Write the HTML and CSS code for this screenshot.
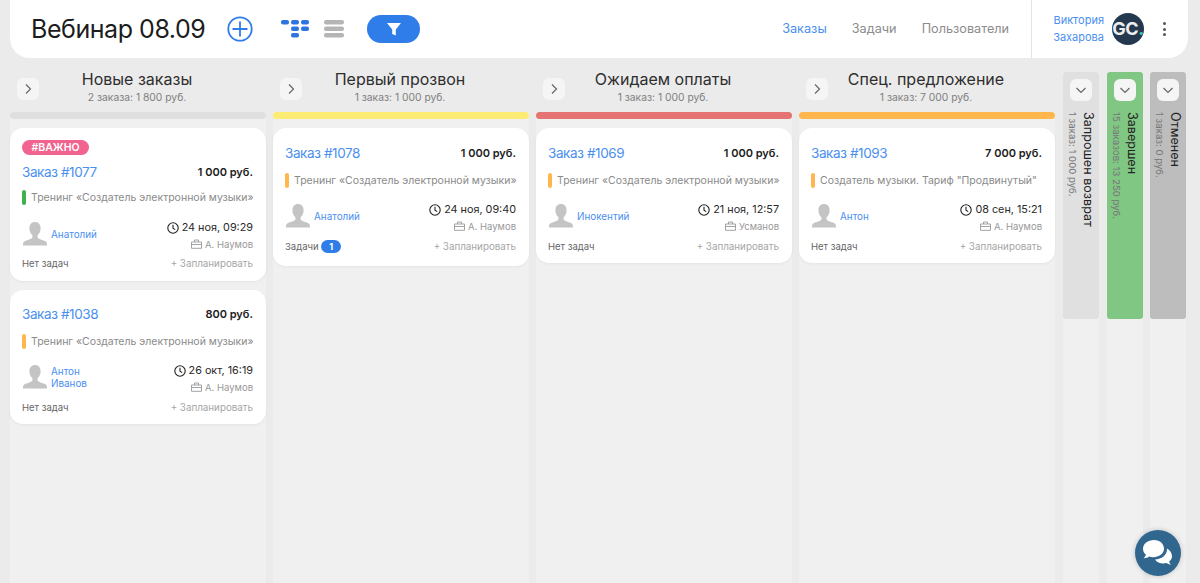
FILE: index.html
```html
<!DOCTYPE html>
<html lang="ru">
<head>
    <meta charset="UTF-8">
    <title>Вебинар 08.09</title>
    <link rel="stylesheet" href="styles.css">
</head>
<body>
    <svg class="sprite" width="0" height="0">
        <symbol id="i-chev-r" viewBox="0 0 12 12"><path d="M4 1.500 8.500 6 4 10.500" fill="none" stroke="#666" stroke-width="1.200"/></symbol>
        <symbol id="i-chev-d" viewBox="0 0 12 12"><path d="M1.500 4 6 8.500 10.500 4" fill="none" stroke="#666" stroke-width="1.200"/></symbol>
        <symbol id="i-user" viewBox="0 0 26 26"><path d="M13 1c3.600 0 5.600 2.700 5.600 6.200 0 3-1.300 5.600-3 7v2.200c0 1 4.400 2.300 7.400 3.600 1.600.7 2 2 2 4.500H1c0-2.500.4-3.800 2-4.500 3-1.300 7.400-2.600 7.400-3.600v-2.200c-1.700-1.400-3-4-3-7C7.400 3.700 9.400 1 13 1z" fill="#c4c4c4"/></symbol>
        <symbol id="i-clock" viewBox="0 0 12 12"><circle cx="6" cy="6" r="5.200" fill="none" stroke="#222" stroke-width="1.100"/><path d="M6 2.800V6.300L8.200 7.600" fill="none" stroke="#222" stroke-width="1.100"/></symbol>
        <symbol id="i-case" viewBox="0 0 11 10"><path d="M.5 3h10v6.300H.5zM3.500 3V1h4v2M.5 5.500h10" fill="none" stroke="#999" stroke-width=".9"/></symbol>
    </svg>

    <header class="topbar">
        <h1 class="title">Вебинар 08.09</h1>
        <svg class="add-btn" width="26" height="26" viewBox="0 0 26 26"><circle cx="13" cy="13" r="11.700" fill="none" stroke="#2f7de8" stroke-width="1.800"/><path d="M13 5.500v15M5.500 13h15" stroke="#2f7de8" stroke-width="1.800"/></svg>
        <svg class="view-btn view-board" width="30" height="20" viewBox="0 0 30 20" fill="#2f73e0">
            <rect x="1" y="1" width="8" height="4.500" rx="2"/><rect x="11" y="1" width="8" height="4.500" rx="2"/><rect x="21" y="1" width="8" height="4.500" rx="2"/>
            <rect x="11" y="7.500" width="8" height="4.500" rx="2"/><rect x="21" y="7.500" width="8" height="4.500" rx="2"/>
            <rect x="11" y="14" width="8" height="4.500" rx="2"/>
        </svg>
        <svg class="view-btn" width="20" height="20" viewBox="0 0 20 20" fill="#b5b5b5">
            <rect y="1" width="20" height="4.500" rx="2"/><rect y="7.500" width="20" height="4.500" rx="2"/><rect y="14" width="20" height="4.500" rx="2"/>
        </svg>
        <button class="filter-btn"><svg width="14" height="14" viewBox="0 0 14 14"><path d="M0 1h14L8.800 7.500V13.500L5.200 12V7.500z" fill="#fff"/></svg></button>
        <nav class="nav">
            <a class="active">Заказы</a>
            <a>Задачи</a>
            <a>Пользователи</a>
        </nav>
        <div class="profile">
            <div class="profile-name">Виктория<br>Захарова</div>
            <div class="avatar">GC<span>.</span></div>
            <div class="dots"><i></i><i></i><i></i></div>
        </div>
    </header>

    <main class="board">
        <section class="col">
            <div class="col-head">
                <span class="toggle"><svg width="12" height="12"><use href="#i-chev-r"/></svg></span>
                <div class="col-title"><h2>Новые заказы</h2><p>2 заказа: 1 800 руб.</p></div>
            </div>
            <div class="col-bar bar-grey"></div>
            <article class="card card-tagged">
                <span class="tag">#ВАЖНО</span>
                <div class="card-top"><a class="order">Заказ #1077</a><b class="price">1 000 руб.</b></div>
                <div class="product"><i class="mark mark-green"></i>Тренинг «Создатель электронной музыки»</div>
                <div class="card-mid">
                    <svg class="user-pic" width="26" height="26"><use href="#i-user"/></svg>
                    <a class="client">Анатолий</a>
                    <div class="meta">
                        <div class="date"><svg width="12" height="12"><use href="#i-clock"/></svg>24 ноя, 09:29</div>
                        <div class="manager"><svg width="11" height="10"><use href="#i-case"/></svg>А. Наумов</div>
                    </div>
                </div>
                <div class="card-foot"><span>Нет задач</span><a>+ Запланировать</a></div>
            </article>
            <article class="card card-second">
                <div class="card-top"><a class="order">Заказ #1038</a><b class="price">800 руб.</b></div>
                <div class="product"><i class="mark mark-orange"></i>Тренинг «Создатель электронной музыки»</div>
                <div class="card-mid">
                    <svg class="user-pic" width="26" height="26"><use href="#i-user"/></svg>
                    <a class="client">Антон<br>Иванов</a>
                    <div class="meta">
                        <div class="date"><svg width="12" height="12"><use href="#i-clock"/></svg>26 окт, 16:19</div>
                        <div class="manager"><svg width="11" height="10"><use href="#i-case"/></svg>А. Наумов</div>
                    </div>
                </div>
                <div class="card-foot"><span>Нет задач</span><a>+ Запланировать</a></div>
            </article>
        </section>

        <section class="col">
            <div class="col-head">
                <span class="toggle"><svg width="12" height="12"><use href="#i-chev-r"/></svg></span>
                <div class="col-title"><h2>Первый прозвон</h2><p>1 заказ: 1 000 руб.</p></div>
            </div>
            <div class="col-bar bar-yellow"></div>
            <article class="card card-tasks">
                <div class="card-top"><a class="order">Заказ #1078</a><b class="price">1 000 руб.</b></div>
                <div class="product"><i class="mark mark-orange"></i>Тренинг «Создатель электронной музыки»</div>
                <div class="card-mid">
                    <svg class="user-pic" width="26" height="26"><use href="#i-user"/></svg>
                    <a class="client">Анатолий</a>
                    <div class="meta">
                        <div class="date"><svg width="12" height="12"><use href="#i-clock"/></svg>24 ноя, 09:40</div>
                        <div class="manager"><svg width="11" height="10"><use href="#i-case"/></svg>А. Наумов</div>
                    </div>
                </div>
                <div class="card-foot"><span>Задачи <em class="count">1</em></span><a>+ Запланировать</a></div>
            </article>
        </section>

        <section class="col">
            <div class="col-head">
                <span class="toggle"><svg width="12" height="12"><use href="#i-chev-r"/></svg></span>
                <div class="col-title"><h2>Ожидаем оплаты</h2><p>1 заказ: 1 000 руб.</p></div>
            </div>
            <div class="col-bar bar-red"></div>
            <article class="card">
                <div class="card-top"><a class="order">Заказ #1069</a><b class="price">1 000 руб.</b></div>
                <div class="product"><i class="mark mark-orange"></i>Тренинг «Создатель электронной музыки»</div>
                <div class="card-mid">
                    <svg class="user-pic" width="26" height="26"><use href="#i-user"/></svg>
                    <a class="client">Инокентий</a>
                    <div class="meta">
                        <div class="date"><svg width="12" height="12"><use href="#i-clock"/></svg>21 ноя, 12:57</div>
                        <div class="manager"><svg width="11" height="10"><use href="#i-case"/></svg>Усманов</div>
                    </div>
                </div>
                <div class="card-foot"><span>Нет задач</span><a>+ Запланировать</a></div>
            </article>
        </section>

        <section class="col col-last">
            <div class="col-head">
                <span class="toggle"><svg width="12" height="12"><use href="#i-chev-r"/></svg></span>
                <div class="col-title"><h2>Спец. предложение</h2><p>1 заказ: 7 000 руб.</p></div>
            </div>
            <div class="col-bar bar-orange"></div>
            <article class="card">
                <div class="card-top"><a class="order">Заказ #1093</a><b class="price">7 000 руб.</b></div>
                <div class="product"><i class="mark mark-orange"></i>Создатель музыки. Тариф "Продвинутый"</div>
                <div class="card-mid">
                    <svg class="user-pic" width="26" height="26"><use href="#i-user"/></svg>
                    <a class="client">Антон</a>
                    <div class="meta">
                        <div class="date"><svg width="12" height="12"><use href="#i-clock"/></svg>08 сен, 15:21</div>
                        <div class="manager"><svg width="11" height="10"><use href="#i-case"/></svg>А. Наумов</div>
                    </div>
                </div>
                <div class="card-foot"><span>Нет задач</span><a>+ Запланировать</a></div>
            </article>
        </section>

        <section class="col-mini">
            <div class="mini-head mini-grey">
                <span class="toggle"><svg width="12" height="12"><use href="#i-chev-d"/></svg></span>
                <div class="mini-text"><h2>Запрошен возврат</h2><p>1 заказ: 1 000 руб.</p></div>
            </div>
        </section>
        <section class="col-mini">
            <div class="mini-head mini-green">
                <span class="toggle"><svg width="12" height="12"><use href="#i-chev-d"/></svg></span>
                <div class="mini-text"><h2>Завершен</h2><p>15 заказов: 13 250 руб.</p></div>
            </div>
        </section>
        <section class="col-mini col-mini-last">
            <div class="mini-head mini-dark">
                <span class="toggle"><svg width="12" height="12"><use href="#i-chev-d"/></svg></span>
                <div class="mini-text"><h2>Отменен</h2><p>1 заказ: 0 руб.</p></div>
            </div>
        </section>
    </main>

    <button class="chat-btn">
        <svg width="32" height="28" viewBox="0 0 32 28" fill="#fff">
            <path d="M12 1C5.900 1 1 4.900 1 9.700c0 2.300 1.100 4.300 2.900 5.900-.3 1.500-1.200 2.800-2.300 3.600 2.100.1 4.200-.6 5.700-1.600 1.200.4 2.400.6 3.700.6 6.100 0 11-3.900 11-8.500S18.100 1 12 1z"/>
            <path d="M24.900 9.400c.1.400.1.700.1 1.100 0 5.500-5.300 9.700-12 10 1.700 2.400 4.800 4 8.400 4 1 0 2-.1 2.900-.4 1.300.9 3 1.500 4.700 1.500-.9-.7-1.600-1.800-1.900-3 1.700-1.300 2.900-3.200 2.900-5.200 0-3.400-1.900-6.400-5.100-8z"/>
        </svg>
    </button>
</body>
</html>
```

FILE: styles.css
```css
* {
    box-sizing: border-box;
}

html, body {
    height: 100%;
}

body {
    margin: 0;
    background: #ebebeb;
    font-family: Inter, "Noto Sans", sans-serif;
    color: #222;
    overflow: hidden;
}

.sprite {
    display: block;
    height: 0;
}

h1, h2, p {
    margin: 0;
    font-weight: 400;
}

/* шапка */
.topbar {
    display: flex;
    align-items: center;
    height: 58px;
    margin: 0 12px 0 10px;
    padding-left: 21px;
    background: #fff;
    border-radius: 0 0 20px 20px;
}

.title {
    margin-top: -1px;
    font-size: 25px;
    letter-spacing: -0.45px;
    color: #1c1c1c;
    white-space: nowrap;
}

.add-btn {
    margin-left: 22px;
}

.view-btn {
    margin-left: 14px;
}

.view-board {
    margin-left: 27px;
}

.filter-btn {
    display: flex;
    align-items: center;
    justify-content: center;
    width: 53px;
    height: 28px;
    margin-left: 23px;
    padding: 0;
    background: #2f7de8;
    border: none;
    border-radius: 14px;
}

.nav {
    display: flex;
    gap: 25px;
    margin: -2px 0 0 auto;
    font-size: 12.700px;
    color: #8c8c8c;
}

.nav .active {
    color: #4a8ff0;
}

.profile {
    display: flex;
    align-items: center;
    height: 100%;
    margin-left: 22px;
    padding-left: 21px;
    border-left: 1px solid #e4e4e4;
}

.profile-name {
    font-size: 11px;
    line-height: 17px;
    color: #4a8ff0;
    text-align: right;
}

.avatar {
    width: 32px;
    height: 32px;
    margin-left: 8px;
    background: #24394f;
    border-radius: 50%;
    font-size: 18px;
    font-weight: 700;
    line-height: 32px;
    text-align: center;
    color: #eee;
    letter-spacing: -0.5px;
    white-space: nowrap;
}

.avatar span {
    color: #35c9b5;
}

.dots {
    display: flex;
    flex-direction: column;
    gap: 2.500px;
    margin: 0 22px 0 19px;
}

.dots i {
    width: 3px;
    height: 3px;
    background: #555;
    border-radius: 50%;
}

/* доска */
.board {
    display: flex;
    height: calc(100% - 58px);
    padding-left: 10px;
}

.col {
    display: flex;
    flex-direction: column;
    width: 256px;
    margin-right: 7px;
    background: linear-gradient(#ebebeb 54px, #f0f0f0 54px);
}

.col-last {
    margin-right: 8px;
}

.col-head {
    display: flex;
    height: 54px;
    padding: 20px 0 0 7px;
}

.toggle {
    display: flex;
    align-items: center;
    justify-content: center;
    flex: none;
    width: 22px;
    height: 22px;
    background: #f5f5f5;
    border-radius: 6px;
}

.col-title {
    flex: 1;
    margin-top: -11px;
    padding-right: 31px;
    text-align: center;
}

.col-title h2 {
    font-size: 16px;
    line-height: 24px;
    color: #2e2e2e;
}

.col-title p {
    font-size: 10.300px;
    line-height: 13px;
    color: #808080;
}

.col-bar {
    height: 7px;
    margin-bottom: 9px;
    border-radius: 4px;
}

.bar-grey { background: #dfdfdf; }
.bar-yellow { background: #fdec74; }
.bar-red { background: #e57373; }
.bar-orange { background: #ffb74d; }

.card {
    height: 135px;
    margin-bottom: 9px;
    padding: 15px 13px 0 12px;
    background: #fff;
    border-radius: 13px;
    box-shadow: 0 1px 3px rgba(0, 0, 0, 0.05);
}

.card-tasks {
    height: 138px;
}

.card-second {
    height: 134px;
    padding-top: 14px;
}

.card-tagged {
    height: 153px;
    padding-top: 9px;
}

.card-tagged .product {
    margin-top: 8px;
}

.card-tagged .card-mid {
    margin-top: 10px;
}

.card-tagged .card-foot {
    margin-top: 1px;
}

.tag {
    display: block;
    width: 67px;
    height: 15px;
    margin: 3px 0 7px;
    background: #f0648f;
    border-radius: 8px;
    font-size: 10.500px;
    font-weight: 600;
    line-height: 15px;
    text-align: center;
    color: #fff;
}

.card-top {
    display: flex;
    justify-content: space-between;
    align-items: center;
    height: 20px;
}

.order {
    font-size: 13.500px;
    letter-spacing: -0.4px;
    color: #4a8ff0;
}

.price {
    font-size: 11px;
    font-weight: 600;
    color: #1c1c1c;
}

.product {
    display: flex;
    align-items: center;
    height: 15px;
    margin-top: 10px;
    font-size: 10.500px;
    color: #8a8a8a;
    white-space: nowrap;
}

.mark {
    flex: none;
    width: 4px;
    height: 15px;
    margin-right: 5px;
    border-radius: 2px;
}

.mark-green { background: #3fb14f; }
.mark-orange { background: #ffb74d; }

.card-mid {
    display: flex;
    align-items: center;
    height: 40px;
    margin-top: 9px;
}

.user-pic {
    flex: none;
    margin-top: -2px;
}

.client {
    margin: -3px 0 0 3px;
    font-size: 9.900px;
    line-height: 12px;
    color: #4a8ff0;
}

.meta {
    margin-left: auto;
    text-align: right;
}

.date {
    display: flex;
    align-items: center;
    justify-content: flex-end;
    gap: 3px;
    font-size: 10.800px;
    line-height: 18px;
    color: #2a2a2a;
}

.manager {
    display: flex;
    align-items: center;
    justify-content: flex-end;
    gap: 3px;
    font-size: 9.500px;
    line-height: 15px;
    color: #999;
}

.card-foot {
    display: flex;
    justify-content: space-between;
    align-items: center;
    height: 14px;
    margin-top: 2px;
    font-size: 9.500px;
    color: #666;
}

.card-foot a {
    font-size: 9.800px;
    color: #a6a6a6;
}

.count {
    display: inline-block;
    width: 20px;
    height: 13px;
    background: #2f7de8;
    border-radius: 7px;
    font-size: 9px;
    font-style: normal;
    font-weight: 700;
    line-height: 13px;
    text-align: center;
    color: #fff;
}

/* свёрнутые колонки */
.col-mini {
    width: 36px;
    margin-right: 8px;
    padding-top: 14px;
    background: linear-gradient(#ebebeb 14px, #f0f0f0 14px);
}

.col-mini-last {
    margin-right: 0;
    margin-left: -1px;
}

.mini-head {
    display: flex;
    flex-direction: column;
    align-items: center;
    height: 247px;
    padding-top: 7px;
    border-radius: 3px;
}

.mini-grey { background: #e0e0e0; }
.mini-green { background: #81c784; }
.mini-dark { background: #bdbdbd; }

.mini-text {
    display: flex;
    flex-direction: column;
    gap: 1px;
    margin-top: 11px;
    writing-mode: vertical-rl;
    white-space: nowrap;
}

.mini-text h2 {
    font-size: 12.600px;
    line-height: 17px;
    color: #222;
}

.mini-text p {
    font-size: 9.600px;
    line-height: 13px;
    color: #777;
}

.chat-btn {
    position: fixed;
    right: 19px;
    bottom: 7px;
    display: flex;
    align-items: center;
    justify-content: center;
    width: 46px;
    height: 46px;
    padding: 0;
    background: #31668f;
    border: none;
    border-radius: 50%;
    box-shadow: 0 0 5px rgba(0, 0, 0, 0.2);
}
```
